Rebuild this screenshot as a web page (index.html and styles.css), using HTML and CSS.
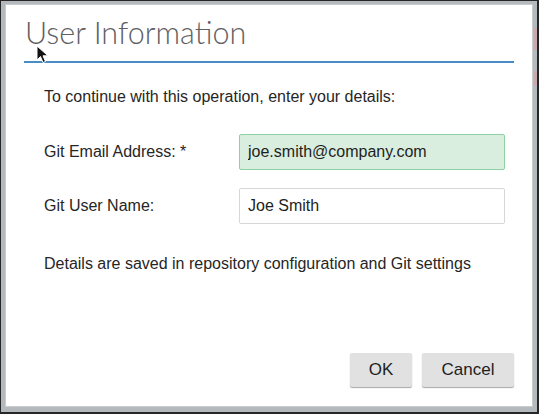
FILE: index.html
```html
<!DOCTYPE html>
<html lang="en">
<head>
<meta charset="utf-8">
<title>User Information</title>
<link rel="stylesheet" href="styles.css">
</head>
<body>
<div class="screen">
  <div class="dialog">
    <div class="header">
      <h1 class="title">User Information</h1>
    </div>
    <div class="body">
      <p class="intro">To continue with this operation, enter your details:</p>
      <div class="row">
        <label class="label" for="email">Git Email Address: *</label>
        <input id="email" class="field field-valid" type="text" value="joe.smith@company.com">
      </div>
      <div class="row">
        <label class="label" for="name">Git User Name:</label>
        <input id="name" class="field" type="text" value="Joe Smith">
      </div>
      <p class="note">Details are saved in repository configuration and Git settings</p>
    </div>
    <div class="footer">
      <button class="btn btn-ok">OK</button>
      <button class="btn btn-cancel">Cancel</button>
    </div>
  </div>
  <span class="peek peek-1"></span>
  <span class="peek peek-2"></span>
  <svg class="cursor" width="14" height="20" viewBox="0 0 14 20" aria-hidden="true">
    <path d="M1 1 L1 15 L4.5 11.5 L7 17.5 L9.5 16.5 L7 10.8 L12 10.8 Z" fill="#111" stroke="#fff" stroke-width="1"/>
  </svg>
</div>
</body>
</html>
```

FILE: styles.css
```css
html, body {
  margin: 0;
  padding: 0;
  background: #b3b9bc;
}

.screen {
  position: relative;
  box-sizing: border-box;
  width: 539px;
  height: 414px;
  border-style: solid;
  border-color: #262626;
  border-width: 1px 2px 2px 1px;
  padding: 3px 4px 5px 4px;
  background: #b3b9bc;
}

.dialog {
  box-sizing: border-box;
  width: 100%;
  height: 100%;
  background: #ffffff;
  border: 1px solid #c9cccd;
  display: flex;
  flex-direction: column;
  font-family: "Liberation Sans", Arial, sans-serif;
  color: #262626;
}

.header {
  margin: 0 18px;
  border-bottom: 2px solid #4a8cc6;
}

.title {
  margin: 0;
  padding: 8px 0 10px 1px;
  font-family: "Lato", "Open Sans", sans-serif;
  font-weight: 300;
  font-size: 30.5px;
  line-height: 38px;
  color: #5f6062;
}

.body {
  padding: 25px 27px 0 38px;
  font-size: 16px;
}

.intro {
  margin: 0 0 28px 0;
  line-height: 18px;
}

.row {
  display: flex;
  align-items: center;
  margin-bottom: 18px;
}

.label {
  width: 195px;
  flex: none;
}

.field {
  box-sizing: border-box;
  flex: 1;
  height: 36px;
  padding: 0 8px;
  font-family: "Liberation Sans", Arial, sans-serif;
  font-size: 16px;
  color: #1e1e1e;
  background: #ffffff;
  border: 1px solid #d6d6d6;
  border-radius: 2px;
  outline: none;
}

.field-valid {
  background: #d9eedf;
  border-color: #8fd1a2;
}

.note {
  margin: 31px 0 0 0;
  line-height: 18px;
}

.footer {
  margin-top: auto;
  display: flex;
  justify-content: flex-end;
  gap: 10px;
  padding: 0 18px 19px 0;
}

.btn {
  box-sizing: border-box;
  height: 34px;
  padding: 0;
  font-family: "Liberation Sans", Arial, sans-serif;
  font-size: 17px;
  color: #1e1e1e;
  background: #e1e1e1;
  border: none;
  border-radius: 2px;
  box-shadow: 0 1px 1px rgba(0, 0, 0, 0.35);
}

.btn-ok {
  width: 62px;
}

.btn-cancel {
  width: 92px;
}

.peek {
  position: absolute;
  right: 0;
  width: 3px;
  background: #c7a9ae;
}

.peek-1 {
  top: 27px;
  height: 22px;
}

.peek-2 {
  top: 70px;
  height: 15px;
}

.cursor {
  position: absolute;
  left: 35px;
  top: 44px;
}
```
